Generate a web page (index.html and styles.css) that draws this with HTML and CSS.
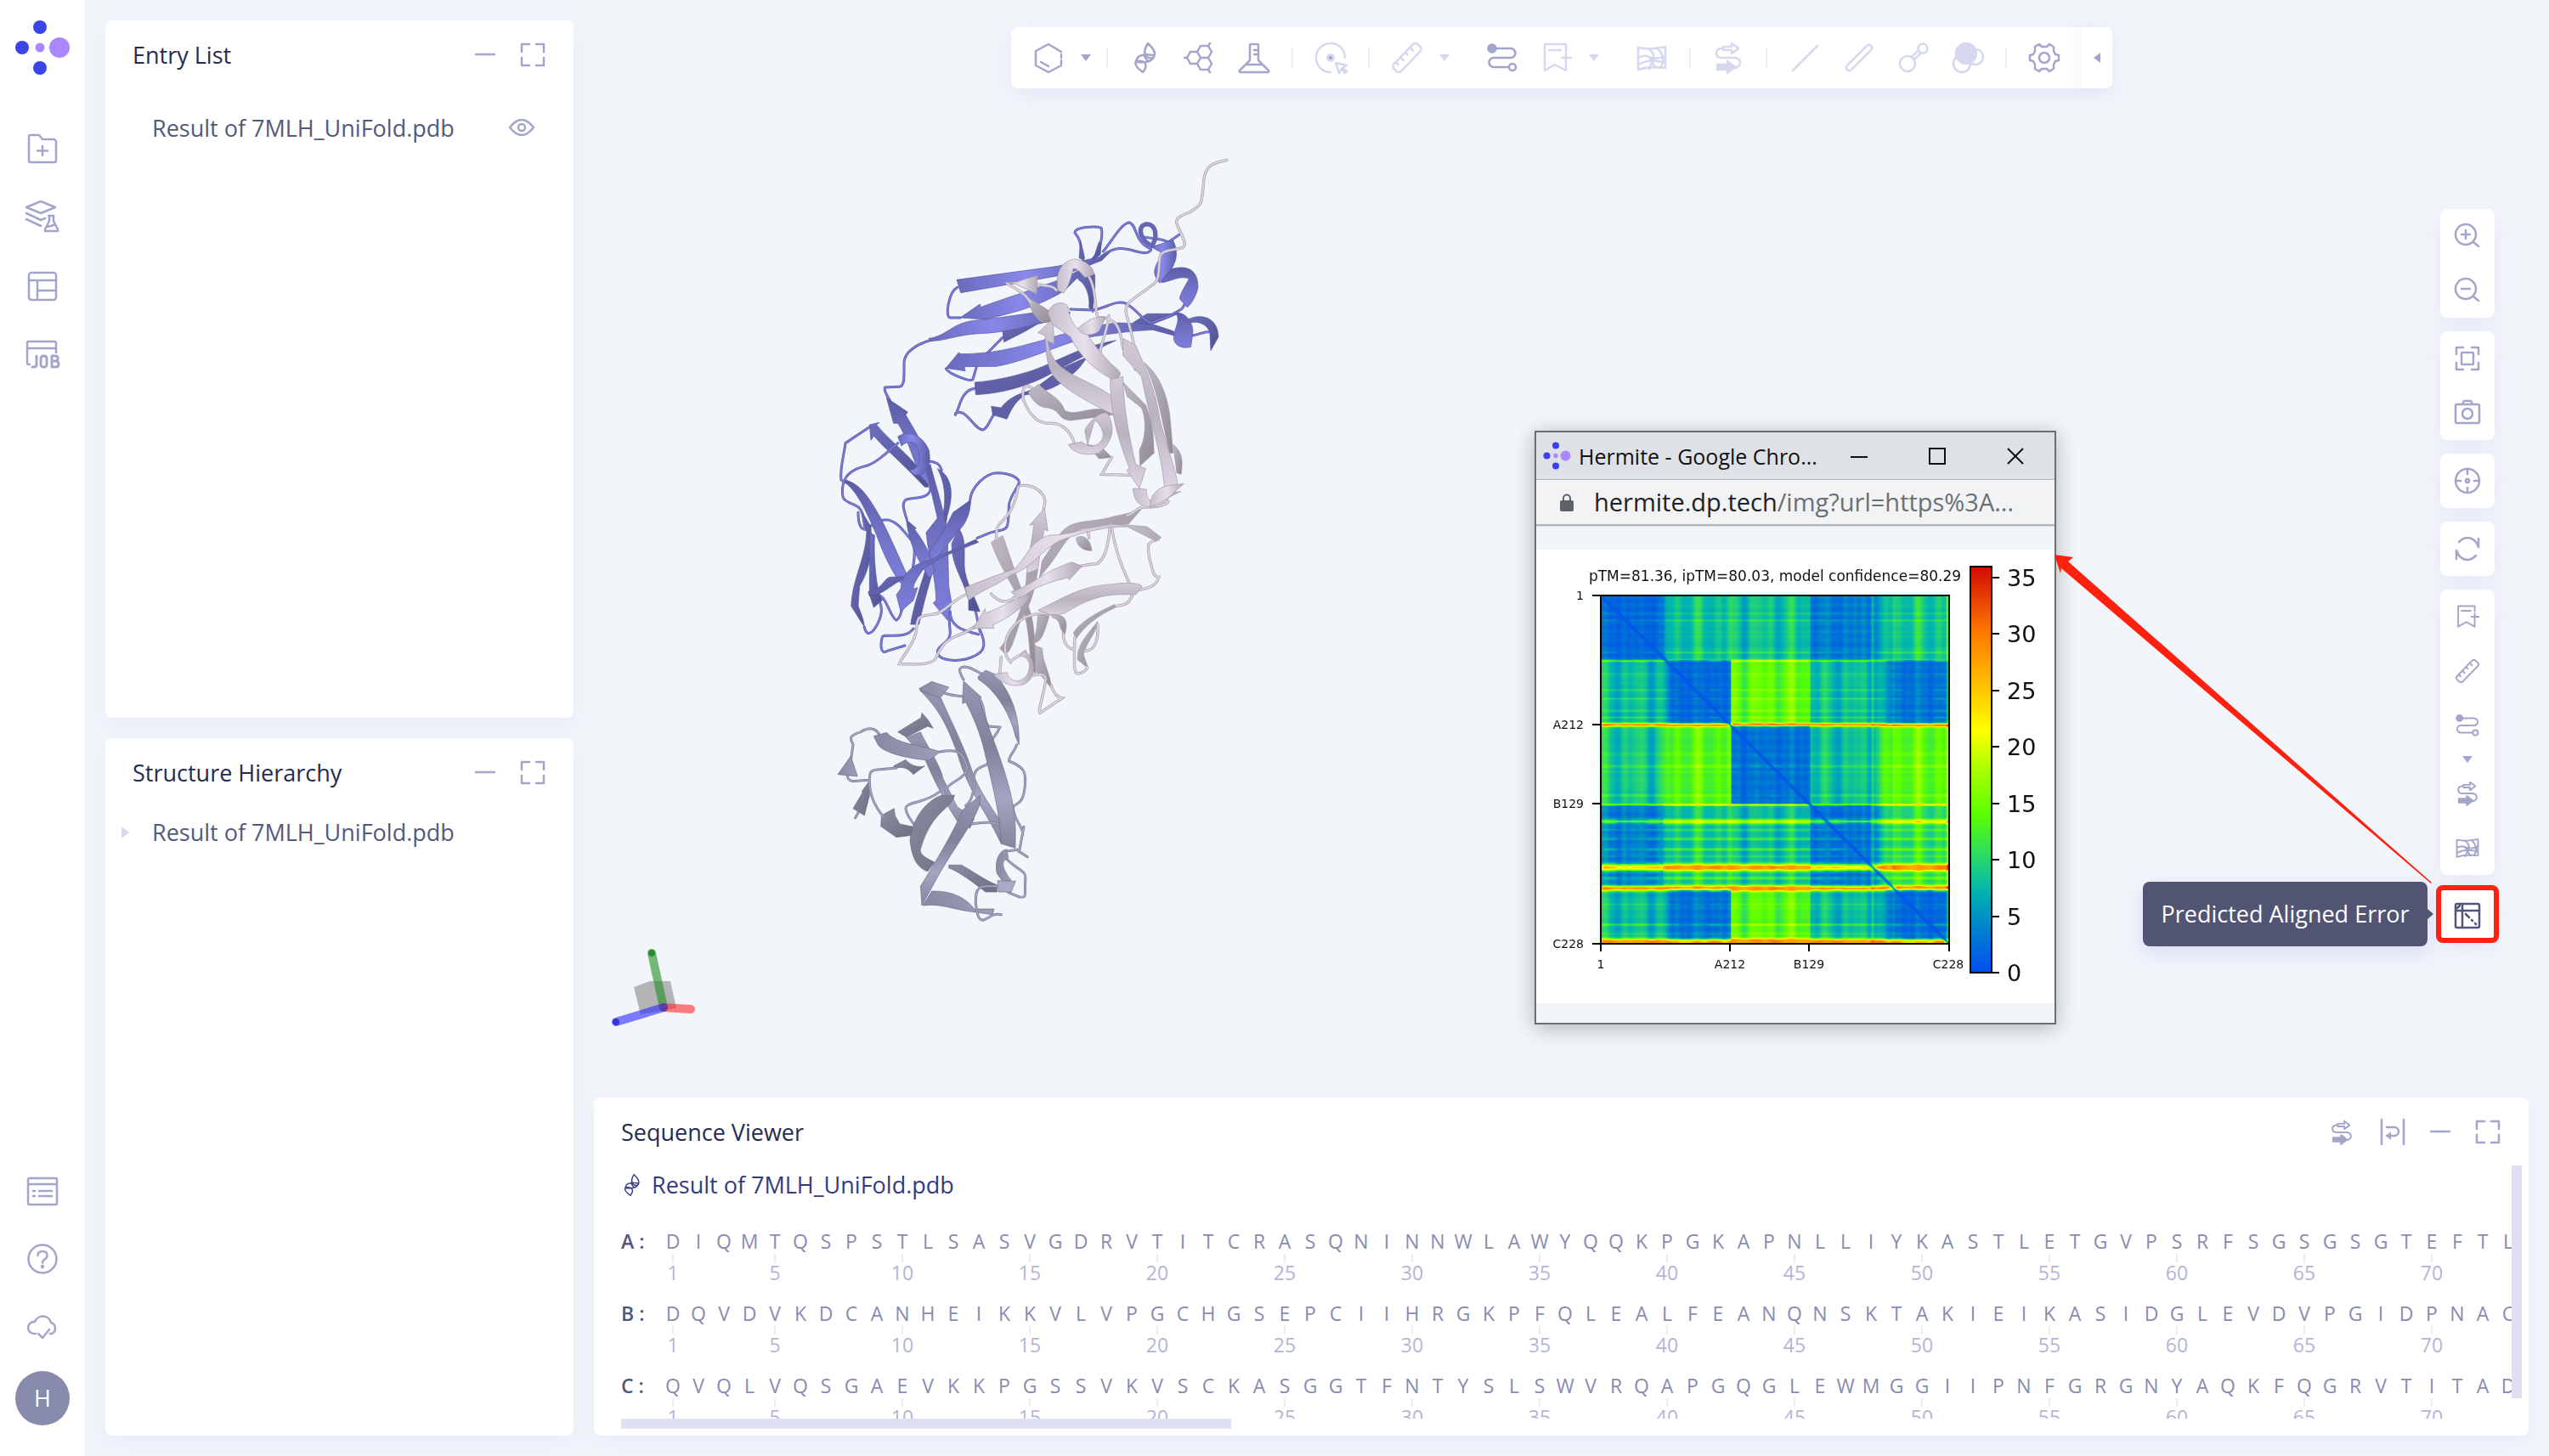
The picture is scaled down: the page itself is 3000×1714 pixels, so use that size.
FILE: index.html
```html
<!DOCTYPE html>
<html lang="en">
<head>
<meta charset="utf-8">
<title>Hermite</title>
<link rel="stylesheet" href="styles.css">
</head>
<body>
<svg class="defs" aria-hidden="true">
  <symbol id="i-logo" viewBox="0 0 66 66"><g fill="#3b44e6"><circle cx="30" cy="9" r="8"/><circle cx="30" cy="57" r="8"/><circle cx="9" cy="33" r="8"/></g><g fill="#aa88ff"><circle cx="30" cy="33" r="5.5"/><circle cx="53" cy="33" r="12"/></g></symbol>
  <symbol id="i-folder" viewBox="0 0 36 36"><path d="M4 2h10l4 5h13a3 3 0 0 1 3 3v22a2 2 0 0 1-2 2H4a2 2 0 0 1-2-2V4a2 2 0 0 1 2-2ZM18 15v11M12 20.500h12"/></symbol>
  <symbol id="i-layers" viewBox="0 0 40 40"><path d="M18 1 35 8 18 15 1 8ZM1 15l17 8 5-2M1 22l17 8M27 18h6M28 18v6l-5 10v2h15v-2l-5-10v-6M25 31l5-1 5-2"/></symbol>
  <symbol id="i-table" viewBox="0 0 36 36"><rect x="2" y="2" width="32" height="32" rx="3"/><path d="M2 11h32M12 11v23M12 23h22"/></symbol>
  <symbol id="i-job" viewBox="0 0 40 40"><path d="M5 31H4a2 2 0 0 1-2-2V6a2 2 0 0 1 2-2h30a2 2 0 0 1 2 2v11M2 12h34"/><path d="M13 21v10q0 3-3 3h-2" stroke-width="3"/><rect x="18" y="21" width="7" height="13" rx="3" stroke-width="3"/><path d="M31 21h4q4 0 3 3 0 3-3 3h-4 5q3 0 3 4 0 3-4 3h-4Z" stroke-width="3"/></symbol>
  <symbol id="i-list" viewBox="0 0 36 36"><rect x="1" y="3" width="34" height="31" rx="2"/><path d="M1 10h34M7 18h2M7 24h2M14 18h15M14 24h15"/></symbol>
  <symbol id="i-help" viewBox="0 0 36 36"><circle cx="18" cy="18" r="16.500"/><path d="M12.500 14q0-5 5.500-5t5.500 5q0 3-3 4.500-2.500 1.500-2.500 4"/><circle cx="18" cy="27" r="1" fill="currentColor"/></symbol>
  <symbol id="i-cloud" viewBox="0 0 36 36"><path d="M10 26H8a7 7 0 0 1 0-14h1a10 10 0 0 1 19 1 7 7 0 0 1 1 13h-2M13 26l5 5 8-10"/></symbol>
  <symbol id="i-minus" viewBox="0 0 32 32"><path d="M5 15h22"/></symbol>
  <symbol id="i-expand" viewBox="0 0 32 32"><path d="M12 3H3v9M20 3h9v9M12 28H3v-9M20 28h9v-9"/></symbol>
  <symbol id="i-eye" viewBox="0 0 32 32"><path d="M2 15Q9 6 16 6t14 9q-7 9-14 9T2 15Z"/><circle cx="16" cy="15" r="4"/></symbol>
  <symbol id="i-wrap" viewBox="0 0 32 32"><path d="M3 1v29M29 1v29M9 10h9a5 5 0 0 1 0 10H9"/><path d="M14 15v10l-6-5Z" fill="currentColor" stroke="none"/></symbol>
  <symbol id="i-hex" viewBox="0 0 36 36"><path d="M33 11 18 2 3 10v17l15 8 15-8M33 14v4M33 21v4M9 23l9 5"/></symbol>
  <symbol id="i-helix" viewBox="0 0 36 36"><path d="M21 1Q14 12 20 17q6 3 8 0Q32 11 21 1ZM27 15Q8 12 7 23M8 23q19 2 21-9M7 22q9-1 11 3 2 4-3 10Q4 27 7 22ZM16 15l5 7"/></symbol>
  <symbol id="i-rings" viewBox="0 0 36 36"><path d="m3 18 4-7h8l4 7-4 7H7ZM15 11l4-7h9l4 7-4 7h-9M28 18l4 7-4 7h-9l-4-7M3 18H0M28 4l2-3M28 32l2 3"/></symbol>
  <symbol id="i-flask" viewBox="0 0 36 36"><path d="M13 3q0-1 1-1h8q1 0 1 1v18l12 12q1 2-1 2H2q-2 0-1-2l12-12ZM8 26h20M18 9h5M18 14h5"/></symbol>
  <symbol id="i-disc" viewBox="0 0 36 36"><path d="M35 18A17 17 0 1 0 18 35M24 24l13 3-5 3 5 4-2 2-4-5-3 5Z"/><circle cx="18" cy="18" r="3.500" class="core"/></symbol>
  <symbol id="i-ruler" viewBox="0 0 36 36"><g transform="rotate(-46 18 18)"><rect x="-2" y="12" width="40" height="12" rx="4"/><path d="M5 12v4M13 12v5M21 12v4M29 12v5"/></g></symbol>
  <symbol id="i-path" viewBox="0 0 36 36"><circle cx="6" cy="7" r="4.500" fill="currentColor"/><path d="M10 7h18a5.500 5.500 0 0 1 0 11H8a5.500 5.500 0 0 0 0 11h17"/><circle cx="30" cy="29" r="4"/></symbol>
  <symbol id="i-mark" viewBox="0 0 36 36"><path d="M29 10V2H4v31l12-7 13 7V23M9 9h14M29 13v11M24 18h11"/></symbol>
  <symbol id="i-map" viewBox="0 0 36 36"><path d="M2 6q15 3 32-1v25q-16-3-32 2ZM14 7q8 6 6 12-4 8-5 12M2 18q12-6 16 4 2 5 5 8M14 17q10 4 20-1M2 26q14-8 32-2M24 6q12 12 4 24"/></symbol>
  <symbol id="i-flow" viewBox="0 0 36 36"><path d="M12 7H9q-5 1-5 6 0 5 6 5h16q6 1 6 6 0 4-6 6M12 5h10V1l8 6-8 6V9H12Z"/><path d="M5 26h12v-4l9 7-9 7v-4H5Z" fill="currentColor"/></symbol>
  <symbol id="i-line" viewBox="0 0 36 36"><path d="M4 33 33 4"/></symbol>
  <symbol id="i-tube" viewBox="0 0 36 36"><rect x="-2" y="14.500" width="40" height="7" rx="3.500" transform="rotate(-45 18 18)"/></symbol>
  <symbol id="i-bond" viewBox="0 0 36 36"><circle cx="11" cy="25" r="9"/><circle cx="29" cy="7" r="5.500"/><path d="m16 17 8-8M19 20l8-8"/></symbol>
  <symbol id="i-spheres" viewBox="0 0 36 36"><circle cx="27" cy="17" r="9"/><circle cx="11" cy="25" r="10"/><circle cx="16" cy="13" r="12" fill="currentColor"/></symbol>
  <symbol id="i-gear" viewBox="0 0 36 36"><path d="m12 2 3 3h6l3-3 5 3v5l2 4 4 1v6l-4 1-2 4v5l-5 3-3-3h-6l-3 3-5-3v-5l-2-4-4-1v-6l4-1 2-4V5Z"/><circle cx="18" cy="18" r="6"/></symbol>
  <symbol id="i-zin" viewBox="0 0 32 32"><circle cx="14" cy="14" r="12"/><path d="m23 23 6 5M14 9v10M9 14h10"/></symbol>
  <symbol id="i-zout" viewBox="0 0 32 32"><circle cx="14" cy="14" r="12"/><path d="m23 23 6 5M9 14h10"/></symbol>
  <symbol id="i-focus" viewBox="0 0 32 32"><path d="M11 3H3v8M21 3h8v8M11 29H3v-8M21 29h8v-8"/><rect x="9" y="9" width="14" height="14" rx="1"/></symbol>
  <symbol id="i-camera" viewBox="0 0 32 32"><rect x="2" y="6" width="28" height="22" rx="2"/><path d="M10 6l2-4h8l2 4"/><circle cx="16" cy="17" r="6"/></symbol>
  <symbol id="i-target" viewBox="0 0 32 32"><circle cx="16" cy="16" r="14"/><circle cx="16" cy="16" r="2"/><path d="M16 2v6M16 24v6M2 16h6M24 16h6"/></symbol>
  <symbol id="i-turn" viewBox="0 0 32 32"><path d="M6 8q5-5 10-5 9 0 13 11V4M26 24q-5 5-10 5-9 0-13-11v10"/></symbol>
  <symbol id="i-pae" viewBox="0 0 32 32"><rect x="2" y="2" width="28" height="28" rx="2"/><path d="M2 10h28M10 2v28M4 7l3-3M14 14l4 4M21 21l1 1M25 25l1 1"/></symbol>
</svg>

<div class="app">
  <nav class="rail" aria-label="Main">
    <a class="logo" href="#" aria-label="Hermite"><svg class="logo-art"><use href="#i-logo"/></svg></a>
    <div class="rail-group rail-top">
      <button aria-label="New project"><svg class="icon i36"><use href="#i-folder"/></svg></button>
      <button aria-label="Experiments"><svg class="icon i40"><use href="#i-layers"/></svg></button>
      <button aria-label="Table"><svg class="icon i36"><use href="#i-table"/></svg></button>
      <button aria-label="Jobs"><svg class="icon i40"><use href="#i-job"/></svg></button>
    </div>
    <div class="rail-group rail-bottom">
      <button aria-label="Log"><svg class="icon i36"><use href="#i-list"/></svg></button>
      <button aria-label="Help"><svg class="icon i36"><use href="#i-help"/></svg></button>
      <button aria-label="Cloud sync"><svg class="icon i36"><use href="#i-cloud"/></svg></button>
    </div>
    <button class="avatar">H</button>
  </nav>

  <aside class="panels">
    <section class="card panel">
      <header class="card-head"><h2>Entry List</h2>
        <button aria-label="Minimize"><svg class="icon i32"><use href="#i-minus"/></svg></button>
        <button aria-label="Expand"><svg class="icon i32"><use href="#i-expand"/></svg></button>
      </header>
      <div class="entry first"><span class="entry-name">Result of 7MLH_UniFold.pdb</span><button class="eye" aria-label="Toggle visibility"><svg class="icon i32"><use href="#i-eye"/></svg></button></div>
    </section>
    <section class="card panel">
      <header class="card-head"><h2>Structure Hierarchy</h2>
        <button aria-label="Minimize"><svg class="icon i32"><use href="#i-minus"/></svg></button>
        <button aria-label="Expand"><svg class="icon i32"><use href="#i-expand"/></svg></button>
      </header>
      <div class="entry tree"><button class="twist" aria-label="Expand entry"></button><span class="entry-name">Result of 7MLH_UniFold.pdb</span></div>
    </section>
  </aside>

  <main class="work">
    <section class="viewer" aria-label="3D viewer">
      <div class="toolbar" role="toolbar">
        <button class="tool" aria-label="Ligand"><svg class="icon i36"><use href="#i-hex"/></svg></button><button class="more" aria-label="More"></button><i class="rule"></i>
        <button class="tool" aria-label="Protein"><svg class="icon i36"><use href="#i-helix"/></svg></button>
        <button class="tool" aria-label="Rings"><svg class="icon i36"><use href="#i-rings"/></svg></button>
        <button class="tool" aria-label="Solvent"><svg class="icon i36"><use href="#i-flask"/></svg></button><i class="rule"></i>
        <button class="tool off" aria-label="Select"><svg class="icon i36"><use href="#i-disc"/></svg></button><i class="rule"></i>
        <button class="tool off" aria-label="Measure"><svg class="icon i36"><use href="#i-ruler"/></svg></button><button class="more off spaced" aria-label="More"></button>
        <button class="tool" aria-label="Path"><svg class="icon i36"><use href="#i-path"/></svg></button>
        <button class="tool off" aria-label="Bookmark"><svg class="icon i36"><use href="#i-mark"/></svg></button><button class="more off spaced" aria-label="More"></button>
        <button class="tool off" aria-label="Surface"><svg class="icon i36"><use href="#i-map"/></svg></button><i class="rule"></i>
        <button class="tool off" aria-label="Align"><svg class="icon i36"><use href="#i-flow"/></svg></button><i class="rule"></i>
        <button class="tool off" aria-label="Line"><svg class="icon i36"><use href="#i-line"/></svg></button>
        <button class="tool off" aria-label="Stick"><svg class="icon i36"><use href="#i-tube"/></svg></button>
        <button class="tool off" aria-label="Ball and stick"><svg class="icon i36"><use href="#i-bond"/></svg></button>
        <button class="tool off" aria-label="Spheres"><svg class="icon i36"><use href="#i-spheres"/></svg></button><i class="rule"></i>
        <button class="tool" aria-label="Settings"><svg class="icon i36"><use href="#i-gear"/></svg></button>
        <button class="fold" aria-label="Collapse toolbar"></button>
      </div>

      <svg class="molecule" viewBox="0 0 1560 2880" role="img" aria-label="Protein structure">
        <defs>
          <linearGradient id="b1"><stop offset="0" stop-color="#6a6bbd"/><stop offset=".45" stop-color="#8788ea"/><stop offset="1" stop-color="#5c5da6"/></linearGradient>
          <linearGradient id="b2" x2="0" y2="1"><stop offset="0" stop-color="#5c5da6"/><stop offset=".5" stop-color="#7172c6"/><stop offset="1" stop-color="#7d7edc"/></linearGradient>
          <linearGradient id="b3" x1="0" x2="1" y2="1"><stop offset="0" stop-color="#6e6fc0"/><stop offset="1" stop-color="#50518f"/></linearGradient>
          <linearGradient id="p1"><stop offset="0" stop-color="#c6bfcc"/><stop offset=".5" stop-color="#e8e0ec"/><stop offset="1" stop-color="#b1aab6"/></linearGradient>
          <linearGradient id="p2" x2="0" y2="1"><stop offset="0" stop-color="#d2cad8"/><stop offset=".5" stop-color="#b9b2c0"/><stop offset="1" stop-color="#dcd4e2"/></linearGradient>
          <linearGradient id="p3" x1="0" x2="1" y2="1"><stop offset="0" stop-color="#bfb8c5"/><stop offset="1" stop-color="#918a97"/></linearGradient>
          <linearGradient id="g1" x2="0" y2="1"><stop offset="0" stop-color="#9496b3"/><stop offset=".4" stop-color="#80829b"/><stop offset=".7" stop-color="#a3a5c1"/><stop offset="1" stop-color="#84869e"/></linearGradient>
          <linearGradient id="g2"><stop offset="0" stop-color="#878aa2"/><stop offset="1" stop-color="#9c9eb9"/></linearGradient>
          <linearGradient id="g3" x1="0" x2="1" y2="1"><stop offset="0" stop-color="#8a8ca3"/><stop offset="1" stop-color="#6d6f82"/></linearGradient>
          <g id="blue-coil"><path d="M945 430C935 400 940 370 915 342 915 320 990 318 1008 325 1018 350 1000 390 1000 415M1015 408C1040 380 1080 305 1108 306 1135 315 1125 370 1175 395 1190 400 1185 408 1165 413 1120 415 1080 370 1010 425M1150 355C1190 365 1220 360 1245 375L1285 348M500 535C470 550 455 640 475 642L510 642M410 720C360 735 315 760 312 800 312 850 315 885 295 886L245 888C238 900 255 920 262 935M660 712 605 768M460 822C470 840 545 870 555 860L568 815M562 892C510 900 510 960 493 985M493 980C530 955 560 1040 592 1038 610 1030 620 990 630 985M900 612 980 615C1020 610 1060 580 1090 590 1130 605 1160 660 1185 660L1240 640C1280 620 1300 610 1300 598M1330 705C1360 700 1370 690 1400 692M190 1028 105 1085C100 1130 85 1170 90 1215L110 1225M290 1085C240 1130 210 1155 180 1165 130 1175 100 1200 95 1240 90 1300 110 1285 150 1310 170 1330 165 1340 175 1390M405 1150C440 1155 440 1170 445 1180M405 1240C410 1285 340 1275 318 1285 300 1300 315 1330 322 1355M545 1285C550 1240 600 1190 640 1190 690 1190 720 1210 718 1225 715 1240 680 1280 682 1310 680 1400 680 1385 620 1400L570 1420M150 1330C150 1370 160 1390 175 1390 200 1380 210 1350 260 1357 300 1370 310 1400 345 1435 355 1470 345 1520 338 1555M172 1735C180 1770 200 1760 220 1720 235 1690 235 1670 228 1650M205 1618C250 1610 260 1700 285 1710 300 1705 300 1680 310 1660M345 1740C320 1780 240 1755 235 1770 225 1810 235 1830 250 1820L315 1800M475 1680C475 1730 510 1745 575 1760M580 1745C610 1810 590 1830 530 1848 480 1858 430 1850 430 1820 430 1800 475 1790 475 1755L470 1690M565 1680 580 1750"/></g>
          <g id="pale-coil"><path d="M1452 85C1400 95 1375 105 1370 160 1362 250 1365 240 1320 270 1290 280 1270 290 1275 310 1290 350 1315 380 1295 395 1260 405 1220 400 1215 430 1210 480 1215 510 1190 525 1130 575 1095 580 1095 620 1110 690 1130 720 1128 825M960 490C990 530 985 600 995 640 1060 640 1075 670 1085 750M675 520C740 560 740 560 760 590M785 525C820 530 840 530 850 545M1035 635C1030 700 990 760 1010 790 1040 810 1080 830 1070 845M765 890C730 870 730 900 733 930 760 1000 790 1010 815 1015 870 1010 900 1040 915 1090M1045 1135 1010 1195C1050 1195 1080 1198 1110 1198M722 1235C760 1230 805 1250 810 1290L805 1320M715 1240C705 1300 690 1330 650 1370 635 1385 640 1400 637 1425M1245 1290C1240 1310 1180 1310 1150 1312 1120 1325 1120 1335 1100 1340M1210 1425C1170 1435 1170 1440 1178 1490 1190 1540 1195 1560 1212 1558 1200 1600 1150 1600 1135 1605M1040 1370C1035 1440 1020 1520 975 1512L930 1520M1045 1380C1060 1480 1090 1540 1110 1585M960 1385 965 1420M530 1620C480 1640 450 1690 410 1690 350 1695 360 1710 355 1750 345 1800 310 1830 295 1865 350 1865 400 1870 420 1850 440 1820 440 1790 500 1765 540 1750 550 1740 570 1728M620 1618C650 1650 680 1650 700 1630M840 1690C790 1680 740 1690 700 1730 650 1790 670 1840 688 1858 700 1840 720 1840 740 1820M875 1740C870 1790 890 1810 910 1812M1120 1600C1120 1650 1090 1660 1060 1660M915 1770C910 1900 915 1900 930 1898 950 1895 960 1880 958 1875M995 1725C1000 1780 985 1820 950 1818M655 1840 650 1900M770 1905C830 1890 810 1930 805 1960 795 2010 785 2030 792 2038L870 1985C840 1980 835 1950 832 1940"/></g>
          <g id="grey-coil"><path d="M522 600C505 570 500 555 530 555 560 560 570 575 590 580M455 648C500 665 560 655 580 670 600 700 590 740 610 765L650 768C640 800 600 830 603 850 630 880 640 880 625 890 590 910 555 910 560 950 560 1000 550 1030 530 1045M710 830C700 860 680 870 683 888 740 910 740 930 740 960 735 1050 710 1030 697 1050 695 1090 740 1130 730 1150M225 795C210 765 180 770 160 785 110 800 125 810 132 830L125 880M112 940C115 970 150 955 190 955 190 920 200 920 220 918L285 912M190 960C190 1010 210 1050 240 1085M440 855C520 840 520 870 535 910 530 960 450 960 462 1005M435 998C380 1040 320 1030 318 1055 320 1080 340 1100 350 1115M150 1070 140 1088M550 1110C600 1100 640 1105 655 1115M735 1120 720 1200 680 1205M715 1205 748 1226M670 1230C720 1280 745 1270 740 1310 738 1370 745 1370 720 1368L680 1352M640 1330C570 1325 565 1335 565 1390 570 1430 575 1450 590 1450 620 1440 620 1425 655 1430"/></g>
        </defs>
        <g transform="translate(0 1320)">
          <g class="ribbon grey">
            <path fill="url(#g3)" d="M290 785 372 735 375 718 395 740 415 772 395 765 320 803Z"/>
            <path fill="url(#g1)" d="M320 805 370 785C390 830 440 900 450 950L500 1050 560 1090 545 1125 500 1100C460 1040 420 960 385 880Z"/>
            <path fill="url(#g3)" d="M275 905 318 883C340 910 370 910 385 905L345 935C320 905 300 910 280 912Z"/>
            <path fill="url(#g1)" d="M370 640 442 665C480 750 530 850 555 930 580 1000 640 1080 660 1110L655 1180C600 1060 540 1000 500 860 460 750 430 700 370 640Z"/>
            <path fill="url(#g2)" d="M365 632 410 607 470 627 440 665 370 640Z"/>
            <path fill="url(#g3)" d="M188 960 190 1010 172 1080 132 1055 165 1000 163 995Z"/>
            <path fill="url(#g3)" d="M232 1080 277 1055 280 1080 297 1110 345 1120 340 1150 285 1157 230 1118Z"/>
            <path fill="url(#g3)" d="M470 1255 515 1255C560 1280 600 1310 640 1325L640 1350 600 1350C560 1320 510 1280 470 1265Z"/>
            <path fill="url(#g2)" d="M380 1395 410 1347C480 1345 530 1370 560 1410L630 1410 625 1430 550 1420C480 1410 440 1390 380 1398Z"/>
          </g>
          <use href="#grey-coil" class="coil grey-edge"/><use href="#grey-coil" class="coil grey-core"/>
          <g class="ribbon grey">
            <path fill="url(#g1)" d="M518 685 522 605 585 662 578 670C600 750 660 880 690 1010 710 1100 705 1150 705 1195L655 1180C650 1060 620 960 600 870 580 780 550 720 530 680Z"/>
            <path fill="url(#g1)" d="M573 590 600 567 635 582C690 650 720 720 718 830L705 800C690 730 640 640 575 600Z"/>
            <path fill="url(#g2)" d="M205 800 250 787C290 830 370 830 440 855L400 885C330 880 240 860 220 830Z"/>
            <path fill="url(#g2)" d="M78 935 124 870 148 942Z"/>
            <path fill="url(#g3)" d="M440 1010 490 1008C480 1060 410 1060 370 1200 365 1220 400 1235 420 1245L395 1278C350 1260 340 1220 333 1170 340 1090 390 1030 440 1010Z"/>
            <path fill="url(#g1)" d="M530 1050 580 1010 580 1040C560 1100 500 1180 440 1280L375 1398 370 1330C420 1250 480 1150 520 1060Z"/>
            <path fill="url(#g2)" d="M640 1285C630 1240 650 1200 675 1200L680 1230C650 1240 660 1270 690 1308L665 1320Z"/>
            <path fill="#a8abc8" d="M642 1310 706 1312 690 1350 645 1350Z"/>
          </g>
        </g>
        <g class="ribbon blue">
          <path fill="url(#b3)" d="M190 1020 225 1012 215 1020C280 1100 360 1140 400 1240L385 1240C300 1150 250 1110 205 1060L195 1075Z"/>
          <path fill="url(#b3)" d="M430 1175C480 1200 490 1260 465 1340 450 1440 400 1560 365 1725L335 1725C350 1640 380 1560 420 1430 460 1340 470 1250 430 1175Z"/>
          <path fill="url(#b3)" d="M915 490 985 488C990 560 975 600 980 625L965 605C970 560 950 520 930 510Z"/>
          <path fill="url(#b3)" d="M660 690 745 655 800 655 740 690 665 728Z"/>
          <path fill="url(#b3)" d="M1120 660 1170 628 1280 628 1240 645 1180 668Z"/>
          <path fill="url(#b3)" d="M562 870C640 865 740 840 800 815 860 790 950 740 1060 722 980 760 900 800 830 840 760 880 660 910 565 914Z"/>
        </g>
        <use href="#blue-coil" class="coil blue-edge"/><use href="#blue-coil" class="coil blue-core"/>
        <g class="ribbon blue">
          <path fill="url(#b3)" d="M935 370C940 400 955 430 945 440L970 440 985 420 1000 375 1008 380 1005 420 960 450 930 430Z"/>
          <path fill="url(#b1)" d="M498 508 855 460 1000 428 1040 410 1010 440 880 490 512 554Z"/>
          <path fill="url(#b1)" d="M510 642 580 594 583 605C660 575 780 540 880 500L960 460 985 440 880 545C780 610 650 635 600 648Z"/>
          <path fill="url(#b1)" d="M400 715C470 705 480 655 580 650 680 640 780 620 880 610L900 625 860 650C760 665 700 690 600 697 500 700 470 722 405 725Z"/>
          <path fill="url(#b1)" d="M460 820 505 765 512 770C620 770 700 750 800 722 900 690 1000 665 1070 660L1190 665 1265 690 1265 705 1190 685C1100 690 1030 700 960 712 850 740 760 790 640 814L525 815 528 830Z"/>
          <path fill="url(#b3)" d="M620 955 655 960C700 900 760 910 790 880L870 820 960 780 930 820C860 890 820 900 740 915 700 940 690 970 675 1000L625 985Z"/>
          <path fill="none" class="band" d="M1195 390C1150 380 1130 320 1165 312 1205 305 1210 370 1182 392"/>
          <path fill="url(#b1)" d="M1185 392 1262 368C1285 420 1275 460 1215 520 1180 480 1200 460 1225 415Z"/>
          <path fill="url(#b2)" d="M1222 510 1255 470C1310 455 1350 470 1350 535 1345 560 1330 590 1312 606L1285 575C1290 550 1305 530 1318 505 1290 490 1250 515 1222 518Z"/>
          <path fill="url(#b3)" d="M1300 655C1360 620 1420 640 1422 710L1395 758 1392 700C1390 670 1350 645 1310 665Z"/>
          <path fill="url(#b2)" d="M1270 625C1300 620 1330 650 1332 690L1325 745C1290 755 1258 735 1265 705 1270 670 1290 650 1270 625Z"/>
          <path fill="url(#b2)" d="M250 925 325 975 318 985C350 1040 400 1120 405 1180L410 1245 370 1200C340 1130 320 1060 290 1015L275 1015Z"/>
          <path fill="url(#b1)" d="M290 1062C330 1035 380 1060 400 1110 410 1170 390 1200 350 1198L330 1180C370 1180 375 1130 355 1090 340 1075 320 1080 303 1095Z"/>
          <path fill="url(#b2)" d="M105 1215C160 1230 190 1280 230 1350 270 1430 300 1500 320 1545L300 1580C270 1540 240 1480 215 1410 180 1330 150 1260 105 1225Z"/>
          <path fill="url(#b2)" d="M390 1180 405 1160C420 1220 455 1330 465 1400L470 1590 480 1650 465 1710 415 1650 425 1640C425 1560 400 1500 390 1400L430 1350Z"/>
          <path fill="url(#b2)" d="M485 1330 548 1285C545 1340 530 1370 500 1400 460 1450 420 1500 400 1530L370 1510C410 1460 450 1400 480 1340Z"/>
          <path fill="url(#b2)" d="M320 1355 355 1385 350 1390C380 1430 410 1480 420 1540L400 1560C370 1510 330 1450 320 1355Z"/>
          <path fill="url(#b3)" d="M125 1660C130 1560 175 1500 180 1400L165 1330 195 1380C200 1480 190 1530 155 1590L150 1660C165 1700 170 1710 172 1735Z"/>
          <path fill="url(#b3)" d="M190 1400 208 1410C205 1480 210 1560 225 1620L235 1640 205 1665 190 1620Z"/>
          <path fill="url(#b3)" d="M185 1610C240 1600 240 1560 265 1558L340 1555 300 1570C260 1590 240 1620 190 1625Z"/>
          <path fill="url(#b3)" d="M480 1440 505 1385C530 1420 525 1460 525 1520 530 1580 560 1620 580 1680L540 1675 540 1640C520 1560 480 1520 480 1440Z"/>
          <path fill="url(#b2)" d="M285 1620 300 1600C305 1550 340 1510 400 1500L565 1425 575 1435C500 1465 430 1490 380 1530 360 1560 345 1580 345 1600L360 1595 345 1640 300 1680Z"/>
        </g>
        <g class="ribbon pale">
          <path fill="url(#p3)" d="M1160 800C1220 850 1250 930 1255 1040L1262 1120 1250 1120C1220 1000 1210 900 1160 800Z"/>
          <path fill="url(#p3)" d="M1085 870 1165 950C1200 1040 1190 1080 1195 1120L1145 1165 1143 1110C1170 1060 1165 990 1150 960L1100 920Z"/>
          <path fill="url(#p3)" d="M1262 1090C1300 1120 1295 1160 1290 1195L1275 1190Z"/>
          <path fill="url(#p3)" d="M750 570 820 615 835 650 800 660C770 640 755 610 750 570Z"/>
          <path fill="url(#p3)" d="M620 1435 660 1412C680 1460 700 1540 750 1660 775 1720 775 1800 775 1900L760 1880C755 1800 750 1700 720 1640 680 1560 640 1500 620 1435Z"/>
          <path fill="url(#p3)" d="M745 1545 785 1530C770 1620 760 1650 720 1720 700 1780 690 1820 670 1830L650 1810C700 1750 740 1660 745 1545Z"/>
          <path fill="url(#p3)" d="M860 1410C900 1350 960 1370 1050 1345L1115 1330 1150 1318 1105 1370 950 1385C900 1395 880 1440 830 1510L790 1560 800 1500Z"/>
          <path fill="url(#p3)" d="M910 1755C940 1710 1000 1680 1055 1655L1060 1665C1000 1690 950 1730 920 1775Z"/>
          <path fill="url(#p3)" d="M995 1715C1000 1740 960 1780 945 1830L962 1880 925 1850C920 1800 960 1760 995 1715Z"/>
          <path fill="url(#p3)" d="M775 1800 800 1810C800 1860 830 1900 832 1950L800 1910 775 1890Z"/>
          <path fill="url(#p3)" d="M960 1090 1010 1100 1045 1135 1000 1140Z"/>
          <path fill="url(#p3)" d="M785 1690 825 1695C810 1740 800 1790 770 1790L780 1740Z"/>
          <path fill="url(#p3)" d="M920 1420C940 1405 970 1420 975 1465 940 1465 920 1445 920 1420Z"/>
        </g>
        <use href="#pale-coil" class="coil pale-edge"/><use href="#pale-coil" class="coil pale-core"/>
        <g class="ribbon pale">
          <path fill="url(#p1)" d="M675 517 708 516 783 492 780 558 710 525Z"/>
          <path fill="url(#p1)" d="M855 545C845 480 870 440 915 435 960 440 985 470 982 490L950 500C935 480 925 470 910 468 900 500 895 530 875 555Z"/>
          <path fill="url(#p2)" d="M785 695 838 645 842 735 820 725C830 800 870 820 920 850 980 880 1030 900 1075 945L1055 985C1000 960 900 910 850 860 810 820 815 750 810 705Z"/>
          <path fill="url(#p1)" d="M820 625C830 590 870 580 890 600 895 650 920 690 960 700 980 740 1030 790 1075 840L1060 865C1000 840 930 780 900 710L835 665Z"/>
          <path fill="url(#p1)" d="M925 680C960 650 990 635 1025 640L1000 690C970 710 940 705 925 680Z"/>
          <path fill="url(#p2)" d="M1085 715 1130 740C1170 830 1200 900 1215 1000 1240 1100 1270 1170 1280 1240L1232 1240C1220 1120 1180 1000 1150 850L1085 775Z"/>
          <path fill="url(#p2)" d="M1040 860 1085 850C1085 950 1110 1080 1130 1160L1165 1175 1143 1245 1098 1180 1108 1175C1080 1100 1040 1000 1040 860Z"/>
          <path fill="url(#p3)" d="M750 905 787 877C830 920 860 920 880 970 910 990 960 960 1010 965L1050 985 900 1005C850 1000 870 970 820 960 790 960 770 940 750 905Z"/>
          <path fill="url(#p2)" d="M950 1040C970 1000 1010 970 1030 980 1060 1030 1050 1080 1000 1120 960 1130 910 1125 892 1090L940 1080C970 1110 1010 1090 1015 1060 1015 1040 1000 1010 985 1005L960 1090Z"/>
          <path fill="url(#p1)" d="M1120 1245 1168 1248C1165 1270 1175 1285 1190 1300 1210 1300 1240 1280 1255 1262L1290 1255 1250 1275C1220 1310 1190 1315 1165 1308 1130 1300 1125 1280 1120 1245Z"/>
          <path fill="url(#p1)" d="M1180 1300C1185 1260 1215 1240 1245 1235L1300 1228 1260 1265C1230 1290 1210 1300 1180 1312Z"/>
          <path fill="url(#p2)" d="M755 1375 808 1315 820 1395 806 1390C800 1440 790 1480 785 1530L745 1545C750 1480 765 1430 770 1372Z"/>
          <path fill="url(#p1)" d="M527 1595C590 1570 640 1550 700 1530 740 1500 760 1420 830 1410 900 1410 960 1380 1050 1370L1170 1380 1220 1418 1200 1430 1100 1380C1020 1380 940 1400 860 1430 800 1460 760 1530 690 1550 640 1590 590 1600 540 1640Z"/>
          <path fill="url(#p1)" d="M690 1610C760 1590 800 1540 905 1505L940 1520 895 1568 890 1560C830 1575 770 1590 720 1640Z"/>
          <path fill="url(#p1)" d="M555 1740 598 1670 600 1685C660 1665 690 1640 745 1620L760 1625C720 1680 670 1705 625 1728L630 1738Z"/>
          <path fill="url(#p2)" d="M785 1675C880 1630 930 1590 1050 1583 1100 1575 1150 1580 1152 1592L1130 1620C1060 1620 1000 1610 880 1685L840 1695Z"/>
          <path fill="url(#p3)" d="M835 1690C890 1690 890 1720 880 1760L865 1740C860 1710 850 1705 835 1700Z"/>
          <path fill="url(#p1)" d="M740 1820C780 1850 780 1910 740 1935 700 1950 660 1935 632 1908L630 1900 675 1895C690 1940 740 1930 752 1890 760 1860 750 1840 720 1835Z"/>
        </g>
      </svg>

      <svg class="gizmo" viewBox="0 0 108 108" aria-hidden="true"><path d="m26 54 19-7h24l7 32-42 7Z" fill="#808080" fill-opacity=".55"/><g fill="none" stroke-width="10" stroke-linecap="round"><path d="M61 78 47 14" stroke="#1f8f1f" stroke-opacity=".6"/><path d="m61 78 32 2" stroke="#ff2a2a" stroke-opacity=".6"/><path d="M61 78 5 95" stroke="#2020ff" stroke-opacity=".58"/></g><circle cx="47" cy="14" r="4" fill="#2f8a35"/><circle cx="5" cy="95" r="4" fill="#3636d8"/></svg>

      <div class="popup" role="dialog" aria-label="Predicted aligned error">
        <div class="popup-bar"><svg class="favicon"><use href="#i-logo"/></svg><span class="popup-title">Hermite - Google Chro...</span>
          <button aria-label="Minimize window"><svg viewBox="0 0 20 20"><path d="M0 11h20"/></svg></button>
          <button aria-label="Maximize window"><svg viewBox="0 0 20 20"><path d="M1 1h18v18H1Z"/></svg></button>
          <button aria-label="Close window"><svg viewBox="0 0 20 20"><path d="m1 1 18 18M19 1 1 19"/></svg></button>
        </div>
        <div class="popup-url"><svg class="lock" viewBox="0 0 16 21"><path d="M4 9V5.500a4 4 0 0 1 8 0V9" fill="none" stroke="#5f6368" stroke-width="2"/><rect y="8" width="16" height="13" rx="2" fill="#5f6368"/></svg><span>hermite.dp.tech<em>/img?url=https%3A...</em></span></div>
        <div class="popup-page">
          <figure class="plot">
            <canvas class="heat" id="heat" width="410" height="410"></canvas>
            <svg class="axes" viewBox="0 0 610 534" role="img" aria-label="PAE plot">
              <defs><linearGradient id="jet" x2="0" y2="1"><stop offset="0" stop-color="#d20a05"/><stop offset=".167" stop-color="#ff7d00"/><stop offset=".306" stop-color="#ffc800"/><stop offset=".403" stop-color="#ffff00"/><stop offset=".5" stop-color="#aaff00"/><stop offset=".611" stop-color="#5aff00"/><stop offset=".72" stop-color="#28d76e"/><stop offset=".8" stop-color="#00b4af"/><stop offset=".9" stop-color="#007dd2"/><stop offset="1" stop-color="#034eee"/></linearGradient></defs>
              <text class="plot-title" x="281" y="37" text-anchor="middle">pTM=81.36, ipTM=80.03, model confidence=80.29</text>
              <path class="axis" d="M76 54h410v410H76ZM66 54h10M66 206h10M66 299h10M66 464h10M76 464v9M228 464v9M321 464v9M486 464v9"/>
              <g class="tick" text-anchor="end"><text x="56" y="59">1</text><text x="56" y="211">A212</text><text x="56" y="304">B129</text><text x="56" y="469">C228</text></g>
              <g class="tick" text-anchor="middle"><text x="76" y="493">1</text><text x="228" y="493">A212</text><text x="321" y="493">B129</text><text x="485" y="493">C228</text></g>
              <rect class="bar" x="511" y="20" width="25" height="478"/>
              <path class="axis" d="M536 498h9M536 432h9M536 365h9M536 299h9M536 232h9M536 166h9M536 99h9M536 33h9"/>
              <g class="scale"><text x="554" y="508">0</text><text x="554" y="442">5</text><text x="554" y="375">10</text><text x="554" y="309">15</text><text x="554" y="242">20</text><text x="554" y="176">25</text><text x="554" y="109">30</text><text x="554" y="43">35</text></g>
            </svg>
          </figure>
        </div>
      </div>

      <svg class="pointer" viewBox="0 0 446 390" aria-hidden="true"><path d="M0 1 22 4 16 9 444 387 443 388 8 17 7 23Z" fill="#ff2010"/></svg>

      <div class="side" role="toolbar" aria-label="View tools">
        <div class="stack"><button aria-label="Zoom in"><svg class="icon i32"><use href="#i-zin"/></svg></button><button aria-label="Zoom out"><svg class="icon i32"><use href="#i-zout"/></svg></button></div>
        <div class="stack"><button aria-label="Focus"><svg class="icon i32"><use href="#i-focus"/></svg></button><button aria-label="Screenshot"><svg class="icon i32"><use href="#i-camera"/></svg></button></div>
        <div class="stack"><button aria-label="Center"><svg class="icon i32"><use href="#i-target"/></svg></button></div>
        <div class="stack"><button aria-label="Rotate"><svg class="icon i32"><use href="#i-turn"/></svg></button></div>
        <div class="stack"><button aria-label="Bookmark"><svg class="icon i28"><use href="#i-mark"/></svg></button><button aria-label="Measure"><svg class="icon i28"><use href="#i-ruler"/></svg></button><button aria-label="Path"><svg class="icon i28"><use href="#i-path"/></svg></button><button class="drop" aria-label="More"></button><button aria-label="Align"><svg class="icon i28"><use href="#i-flow"/></svg></button><button aria-label="Surface"><svg class="icon i28"><use href="#i-map"/></svg></button></div>
        <div class="stack marked"><button class="active" aria-describedby="pae-tip" aria-label="PAE"><svg class="icon i32"><use href="#i-pae"/></svg></button><div class="tip" id="pae-tip" role="tooltip">Predicted Aligned Error</div></div>
      </div>
    </section>

    <section class="card seq">
      <header class="card-head"><h2>Sequence Viewer</h2>
        <button class="wide" aria-label="Align"><svg class="icon i28"><use href="#i-flow"/></svg></button>
        <button aria-label="Wrap"><svg class="icon i32"><use href="#i-wrap"/></svg></button>
        <button aria-label="Minimize"><svg class="icon i32"><use href="#i-minus"/></svg></button>
        <button aria-label="Expand"><svg class="icon i32"><use href="#i-expand"/></svg></button>
      </header>
      <div class="seq-body">
        <div class="seq-view">
          <h3><svg class="icon seq-icon"><use href="#i-helix"/></svg>Result of 7MLH_UniFold.pdb</h3>
          <div id="chains"></div>
        </div>
        <div class="vbar"></div>
        <div class="hbar"></div>
      </div>
    </section>
  </main>
</div>
<script src="app.js"></script>
</body>
</html>
```
FILE: styles.css
```css
* { box-sizing: border-box; }
body { margin: 0; background: #f2f5fa; color: #54587a; font: 27px/36px "Open Sans", "Noto Sans", sans-serif; }
h2, h3, figure { margin: 0; }
h2, h3 { font-size: 27px; font-weight: 500; }
button { display: flex; align-items: center; justify-content: center; flex: none; padding: 0; border: 0; background: none; color: #a3a6ca; font: inherit; cursor: pointer; }
.defs { position: absolute; width: 0; height: 0; }
.icon { display: block; overflow: visible; fill: none; stroke: currentColor; stroke-width: 2.5; stroke-linejoin: round; stroke-linecap: round; }
.i28 { width: 28px; height: 28px; }
.i32 { width: 32px; height: 32px; }
.i36 { width: 36px; height: 36px; }
.i40 { width: 40px; height: 40px; }
symbol { overflow: visible; }
.core { fill: #a3a6ca; stroke: #d5d8ee; stroke-width: 3; }

.app { display: grid; grid-template-columns: 100px 551px minmax(0, 1fr); column-gap: 24px; height: 100vh; padding-right: 24px; }

.rail { display: flex; flex-direction: column; align-items: center; padding: 23px 0 36px; background: #fff; }
.logo-art { display: block; width: 66px; height: 66px; }
.rail-group { display: flex; flex-direction: column; gap: 40px; }
.rail-group button { width: 40px; height: 40px; }
.rail-top { gap: 41px; margin-top: 66px; }
.rail-bottom { margin-top: auto; }
.avatar { width: 64px; height: 64px; margin-top: 32px; border-radius: 50%; background: #898bad; color: #fff; }

.panels { display: flex; flex-direction: column; gap: 24px; padding: 24px 0; }
.card { border-radius: 8px; background: #fff; box-shadow: 0 8px 24px rgba(90, 90, 220, .06); }
.panel { flex: 1; }
.card-head { display: flex; align-items: center; gap: 24px; height: 80px; padding: 2px 32px 0; }
.card-head h2 { flex: 1; color: #262b52; }
.card-head .wide { margin-right: 6px; }
.entry { display: flex; align-items: center; height: 62px; padding: 0 45px 0 55px; }
.entry.first { margin-top: 16px; }
.entry-name { flex: 1; }
.tree { padding-left: 19px; }
.twist { width: 36px; justify-content: flex-start; }
.twist::before { content: ""; border: 7px solid transparent; border-left: 9px solid #d5d8ee; border-right: 0; }

.work { display: flex; flex-direction: column; gap: 24px; padding: 24px 0; min-width: 0; }
.viewer { position: relative; flex: 1; min-height: 0; }
.toolbar { position: absolute; z-index: 2; top: 8px; left: 50%; transform: translateX(-50%); display: flex; align-items: center; height: 72px; padding-left: 12px; border-radius: 8px; background: #fff; box-shadow: 0 8px 24px rgba(90, 90, 220, .08); }
.tool { width: 64px; height: 64px; }
.off { color: #d5d8ee; }
.rule { width: 2px; height: 24px; margin: 0 12px; background: #ebedf8; }
.more { width: 24px; height: 40px; }
.spaced { margin-right: 24px; }
.more::before, .drop::before { content: ""; border: 6px solid transparent; border-top: 8px solid currentColor; border-bottom: 0; }
.fold { width: 36px; height: 72px; margin-left: 12px; border-radius: 0 8px 8px 0; box-shadow: -8px 0 16px rgba(90, 90, 220, .05); }
.fold::before { content: ""; border: 6px solid transparent; border-right: 8px solid currentColor; border-left: 0; }

.molecule { position: absolute; left: 261px; top: 136px; width: 520px; height: 960px; }
.ribbon { stroke-width: 2; stroke-linejoin: round; }
.blue { stroke: #55569c; }
.pale { stroke: #9d96a3; }
.grey { stroke: #6b6e84; }
.band { stroke: #6566b4; stroke-width: 16; }
.coil { fill: none; stroke-linecap: round; }
.blue-edge { stroke: #5758a4; stroke-width: 9; }
.blue-core { stroke: #7c7ddb; stroke-width: 5; }
.pale-edge { stroke: #a69fac; stroke-width: 10; }
.pale-core { stroke: #dad2df; stroke-width: 6; }
.grey-edge { stroke: #777a93; stroke-width: 9; }
.grey-core { stroke: #a3a6c2; stroke-width: 5; }
.gizmo { position: absolute; left: 21px; top: 1084px; width: 108px; height: 108px; overflow: visible; }

.popup { position: absolute; right: 556px; top: 483px; width: 614px; border: 2px solid #6b6e73; background: #f1f5fa; box-shadow: 0 4px 24px rgba(0, 0, 0, .28); }
.popup-bar { display: flex; align-items: center; height: 56px; padding-left: 8px; border-bottom: 1px solid #b4b7bb; background: #dee1e6; color: #111; }
.popup-bar button { width: 92px; height: 56px; }
.popup-bar button svg { width: 20px; height: 20px; fill: none; stroke: #111; stroke-width: 2; }
.favicon { width: 33px; height: 33px; }
.popup-title { flex: 1; padding-left: 9px; font-size: 25px; white-space: nowrap; }
.popup-url { display: flex; align-items: center; height: 54px; padding-left: 28px; border-bottom: 2px solid #b0b3b7; background: #f1f3f5; color: #202124; font-size: 29px; white-space: nowrap; }
.popup-url em { color: #6b6f74; font-style: normal; }
.lock { width: 16px; height: 21px; margin-right: 24px; }
.popup-page { padding: 27px 0 23px; border-top: 1px solid #d9dbde; }
.plot { position: relative; background: #fff; }
.axes { position: relative; display: block; width: 100%; }
.heat { position: absolute; left: 76px; top: 54px; width: 410px; height: 410px; }
.axes text { font-family: "DejaVu Sans", sans-serif; fill: #111; }
.axes .plot-title { font-size: 17px; }
.tick { font-size: 14px; }
.scale { font-size: 27px; }
.axis { fill: none; stroke: #000; stroke-width: 2; }
.bar { fill: url(#jet); stroke: #000; stroke-width: 2; }
.pointer { position: absolute; right: 112px; top: 628px; width: 446px; height: 390px; }

.side { position: absolute; right: 40px; top: 222px; display: flex; flex-direction: column; gap: 16px; }
.stack { width: 64px; border-radius: 8px; background: #fff; box-shadow: 0 8px 24px rgba(90, 90, 220, .08); }
.stack button { width: 64px; height: 64px; }
.stack .drop { height: 16px; }
.stack .active { color: #53557a; }
.marked { position: relative; }
.marked::after { content: ""; position: absolute; inset: -4px -5px 0; border: 6px solid #ff2010; border-radius: 8px; pointer-events: none; }
.tip { position: absolute; right: 79px; top: -8px; width: 335px; height: 76px; border-radius: 8px; background: #525473; color: #fff; line-height: 76px; text-align: center; white-space: nowrap; box-shadow: 0 8px 24px rgba(90, 90, 220, .16); }
.tip::after { content: ""; position: absolute; left: 100%; top: 32px; border: 6px solid transparent; border-left: 7px solid #525473; border-right: 0; }

.seq-body { display: grid; grid-template: minmax(0, 1fr) 12px / minmax(0, 1fr) 12px; height: 310px; margin: 0 8px 8px 32px; }
.seq-view { overflow: hidden; }
.seq h3 { display: flex; align-items: center; gap: 10px; height: 46px; margin-bottom: 28px; color: #353a80; }
.seq-icon { width: 26px; height: 26px; stroke-width: 2; }
.chain { display: flex; height: 64px; margin-bottom: 21px; }
.chain-name { flex: none; width: 46px; color: #54557a; font-size: 23px; font-weight: 600; line-height: 30px; white-space: nowrap; }
.residue { display: flex; flex-direction: column; align-items: center; flex: none; width: 30px; color: #898bb0; font-size: 23px; line-height: 30px; }
.residue small { color: #b3b5d8; font-size: 23px; line-height: 24px; }
.residue small::before { content: ""; display: block; width: 2px; height: 10px; margin: 0 auto; background: #ececf0; }
.vbar { height: 274px; background: #dfe0f2; }
.hbar { width: 718px; background: #dfe0f2; }
```
FILE: app.js
```js
const chains = {
  A: 'DIQMTQSPSTLSASVGDRVTITCRASQNINNWLAWYQQKPGKAPNLLIYKASTLETGVPSRFSGSGSGTEFTL',
  B: 'DQVDVKDCANHEIKKVLVPGCHGSEPCIIHRGKPFQLEALFEANQNSKTAKIEIKASIDGLEVDVPGIDPNAC',
  C: 'QVQLVQSGAEVKKPGSSVKVSCKASGGTFNTYSLSWVRQAPGQGLEWMGGIIPNFGRGNYAQKFQGRVTITAD'
};
document.getElementById('chains').innerHTML = Object.entries(chains).map(([name, residues]) =>
  `<div class="chain"><span class="chain-name">${name} :</span>` +
  [...residues].map((r, i) => {
    const n = i + 1;
    return `<span class="residue">${r}${n === 1 || n % 5 === 0 ? `<small>${n}</small>` : ''}</span>`;
  }).join('') + '</div>').join('');

// Predicted aligned error, in angstroms, for the domains of the three chains.
const stops = [[0, 3, 78, 238], [3, 0, 112, 215], [5, 0, 148, 195], [7, 0, 180, 175], [10, 40, 215, 110], [14, 90, 255, 0],
  [18, 170, 255, 0], [21.5, 255, 255, 0], [25, 255, 200, 0], [30, 255, 125, 0], [36, 210, 10, 5]];
function colour(v) {
  v = Math.max(0, Math.min(36, v));
  let k = 1;
  while (stops[k][0] < v) k++;
  const a = stops[k - 1], b = stops[k], t = (v - a[0]) / (b[0] - a[0]);
  return [1, 2, 3].map(c => a[c] + (b[c] - a[c]) * t);
}
// each domain edge: position and softness of the step
const colEdges = [[.186, .006], [.373, .0005], [.6, .0005], [.81, .012]];
const rowEdges = [[.184, .001], [.371, .001], [.598, .001], [.838, .002]];
const base = [
  [2.2, 8, 8, 3.4, 8.5],
  [7.5, 2.4, 14, 7.5, 3],
  [8.5, 13.5, 3, 7.8, 14],
  [3.6, 8.5, 7.5, 2.8, 10.5],
  [7.5, 3.2, 13.5, 7.5, 2.4]
];
const step = (x, [p, w]) => 1 / (1 + Math.exp(-(x - p) / w));
function weights(x, edges) {
  const s = [1, ...edges.map(e => step(x, e)), 0];
  return [0, 1, 2, 3, 4].map(k => s[k] - s[k + 1]);
}
// position, half width, added error
const rowLines = [[.05, .004, 1.5], [.07, .003, 3], [.117, .003, 1.5], [.163, .003, 3], [.186, .004, 6], [.223, .003, 1.5], [.27, .004, 2.5], [.295, .003, 3],
  [.33, .003, 2], [.349, .003, 3], [.370, .005, 23], [.455, .003, 1], [.489, .005, 3], [.505, .003, 1.5], [.573, .004, 2.5], [.6, .003, 12],
  [.648, .007, 12], [.672, .003, 3], [.698, .004, 4], [.728, .004, 5], [.748, .003, 2], [.78, .010, 24], [.81, .005, 5], [.839, .008, 23],
  [.885, .003, 2], [.944, .003, 4], [.97, .003, 1.5], [.994, .009, 27]];
const colLines = [[.779, .005, 4], [.84, .005, 2], [.996, .005, 6]];
const bump = (x, lines) => lines.reduce((s, [p, w, a]) => s + a * Math.exp(-Math.pow((x - p) / w, 2)), 0);
const size = 410;
const ctx = document.getElementById('heat').getContext('2d');
const img = ctx.createImageData(size, size);
for (let j = 0; j < size; j++) {
  const y = j / size, wr = weights(y, rowEdges), rl = bump(y, rowLines);
  for (let i = 0; i < size; i++) {
    const x = i / size, wc = weights(x, colEdges);
    let b = 0;
    for (let r = 0; r < 5; r++) for (let c = 0; c < 5; c++) b += base[r][c] * wr[r] * wc[c];
    let v = b;
    v += (Math.sin(i * .29) * 1.1 + Math.sin(i * .17 + 1) * 1.1 + Math.sin(i * .51) * .4) * Math.min(1.2, b / 7);
    v += (Math.sin(j * .62) * .25 + Math.sin(j * .21) * .3) * Math.min(1, b / 7);
    v += Math.sin((i + j) * .3) * Math.sin((i - j) * .3) * (b < 4 ? .9 : .2);
    const wave = Math.abs(Math.sin(i * .13) * Math.cos(i * .047));
    const damp = b < 4.5 ? .3 + .7 * wave : 1;
    if (rl > 10) v = Math.min(v + rl * (b < 4.5 ? .8 + .2 * wave : 1), 27 + wave * 3);
    else v += rl * damp;
    v += bump(x, colLines);
    v *= Math.min(1, .15 + Math.abs(i - j) / 5);
    const o = (j * size + i) * 4, rgb = colour(v);
    img.data.set([rgb[0], rgb[1], rgb[2], 255], o);
  }
}
ctx.putImageData(img, 0, 0);
```
